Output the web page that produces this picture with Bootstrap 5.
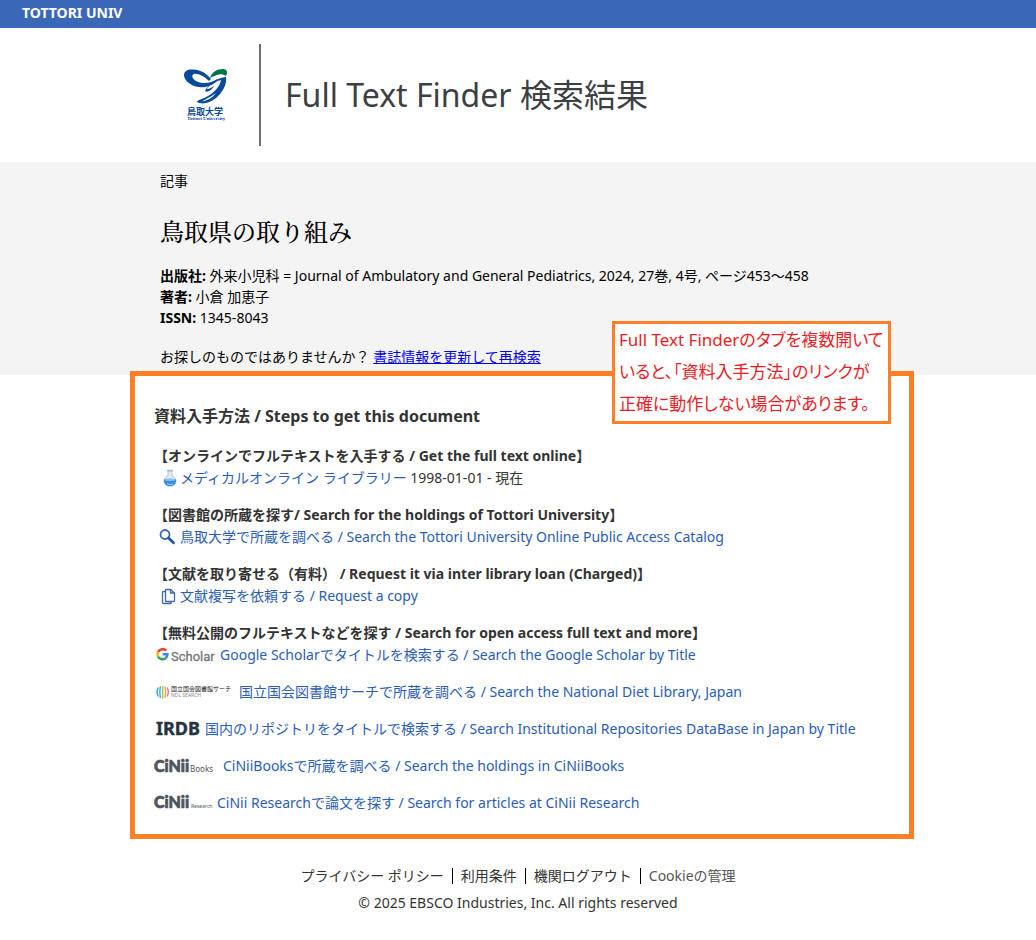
<!DOCTYPE html>
<html lang="ja">
<head>
<meta charset="utf-8">
<meta name="viewport" content="width=device-width, initial-scale=1">
<title>Full Text Finder 検索結果</title>
<link href="https://cdn.jsdelivr.net/npm/bootstrap@5.3.0/dist/css/bootstrap.min.css" rel="stylesheet">
<style>
  body { font-family: "Noto Sans", "Noto Sans CJK JP", sans-serif; font-size: 14px; line-height: 21px; color: #000; background: #fff; }
  a { text-decoration: none; color: #2a5db8; }
  .topbar { background: #3b67b8; line-height: 26px; padding: 0 22px 2px; }
  .topbar a { color: #fff; }
  .column { max-width: 784px; margin: 0 auto; }
  .shell { padding-left: 8px; }
  .inset { padding-left: 30px; }
  .site-logo { width: 99px; }
  .brand-row { height: 102px; }
  .rule { width: 2px; background: #6c7076; }
  .brand-row h1 { font-size: 32px; line-height: 48px; color: #3c4043; padding-left: 24px; }
  .record { background: #f4f4f4; padding-top: 8px; padding-bottom: 8px; }
  .record h2 { font-family: "Noto Serif CJK JP", "Noto Serif JP", "Liberation Serif", "Noto Sans CJK JP", serif; font-size: 24px; line-height: 36px; font-weight: 500; margin: 22px 0 16px; }
  .record .again { margin-top: 18px; }
  .record a { color: #00e; text-decoration: underline; }
  .steps { border: 5px solid #ff7f27; background: #fff; margin-top: -4px; padding: 28px 19px 20px; color: #333; }
  .steps h2 { font-size: 16px; line-height: 24px; margin-bottom: 17px; }
  .steps h3 { font-size: 14px; line-height: 22px; margin: 0; }
  .steps li { line-height: 22px; margin-bottom: 15px; }
  .steps ul:last-child li:last-child { margin-bottom: 0; }
  .steps svg { flex: none; overflow: visible; }
  .notice { top: -55px; right: 18px; width: 279px; border: 3px solid #ff7f27; background: #fff; color: #ed1c24; font-size: 17px; line-height: 32px; padding: 0 4px 1px; white-space: nowrap; font-feature-settings: "palt"; }
  footer { color: #333; padding-top: 26px; padding-bottom: 22px; }
  footer a { color: #333; }
  footer li + li { border-left: 1px solid #000; padding-left: 8px; margin-left: 8px; }
  footer ul { line-height: 16px; margin: 3px 0 5px; }
  footer .cookie { color: #555; }
  footer p { line-height: 28px; }
</style>
</head>
<body>
<nav class="topbar fw-bold"><a href="#">TOTTORI UNIV</a></nav>

<header class="shell py-3">
  <div class="column inset d-flex brand-row">
    <a class="site-logo d-flex align-items-center" href="#" aria-label="鳥取大学">
      <svg width="92" height="102" viewBox="0 0 92 102">
        <path d="M24 31C24 27 28 25 33 25.500C42 26 47 30 51 35L49 37C44 32 38 29 34 30C30 31 33 38 42 39C48 39.500 53 38 57 35L56 38C51 42 45 44 39 43C30 42 24 36 24 31Z" fill="#07499b"/>
        <path d="M45 47C49 39 57 34 66 33C67 40 63 48 56 54C50 59 42 61 37 58C37 56 43 55 48 52C55 48 60 42 61 36C54 38 48 42 47 45C50 45 52 43 54 42C52 46 47 49 45 47Z" fill="#07499b"/>
        <path d="M42 57.500C48 56.500 53 53 56 49C52 52 47 54.500 42 57.500Z" fill="#fff"/>
        <path d="M50 34C52 28 57 25 63 25C67 25 68 28 66 32C63 30 60 30 57 31C54 32 52 33 50 34Z" fill="#007447"/>
        <text x="27" y="71" font-size="9" font-weight="700" fill="#07499b">鳥取大学</text>
        <text x="27" y="76" font-size="5" font-weight="700" font-family="Liberation Serif" fill="#07499b">Tottori University</text>
      </svg>
    </a>
    <div class="rule"></div>
    <h1 class="fw-normal align-self-center mb-0">Full Text Finder 検索結果</h1>
  </div>
</header>

<main>
  <section class="record shell">
    <div class="column inset">
      <div>記事</div>
      <h2>鳥取県の取り組み</h2>
      <div><b>出版社:</b> 外来小児科 = Journal of Ambulatory and General Pediatrics, 2024, 27巻, 4号, ページ453～458</div>
      <div><b>著者:</b> 小倉 加恵子</div>
      <div><b>ISSN:</b> 1345-8043</div>
      <div class="again">お探しのものではありませんか？ <a href="#">書誌情報を更新して再検索</a></div>
    </div>
  </section>

  <div class="shell">
    <section class="steps column position-relative">
      <div class="notice position-absolute">Full Text Finderのタブを複数開いて<br>いると、「資料入手方法」のリンクが<br>正確に動作しない場合があります。</div>
      <h2 class="fw-bold">資料入手方法 / Steps to get this document</h2>

      <h3 class="fw-bold">【オンラインでフルテキストを入手する / Get the full text online】</h3>
      <ul class="list-unstyled mb-0">
        <li class="d-flex align-items-center">
          <svg width="26" height="20" viewBox="0 0 26 20">
            <path d="M14 3V8C11 9 10 11 10 13C10 16 12 18 16 18S22 16 22 13C22 11 21 9 18 8V3Z" fill="#e4edf4" stroke="#a9b6c1" stroke-width=".8"/>
            <path d="M10 11.500Q16 10 22 11.500C22.500 16 19 18.300 16 18.300S9.500 16 10 11.500Z" fill="#358ee0"/>
            <ellipse cx="16" cy="11.800" rx="5" ry="1.300" fill="#83c2ef"/>
            <path d="M13 15.500Q16 17.500 19 16" fill="none" stroke="#8bd2fa"/>
            <path d="M13 2.500H19" stroke="#adb8c2" stroke-width="1.500"/>
          </svg>
          <span><a href="#">メディカルオンライン ライブラリー</a> 1998-01-01 - 現在</span>
        </li>
      </ul>

      <h3 class="fw-bold">【図書館の所蔵を探す/ Search for the holdings of Tottori University】</h3>
      <ul class="list-unstyled mb-0">
        <li class="d-flex align-items-center">
          <svg width="26" height="20" viewBox="0 0 26 20">
            <circle cx="11" cy="7.500" r="4.500" fill="#fff" stroke="#3767b4" stroke-width="1.800"/>
            <path d="M14.500 11L19.500 15.800" stroke="#2455a8" stroke-width="2.800" stroke-linecap="round"/>
          </svg>
          <a href="#">鳥取大学で所蔵を調べる / Search the Tottori University Online Public Access Catalog</a>
        </li>
      </ul>

      <h3 class="fw-bold">【文献を取り寄せる（有料） / Request it via inter library loan (Charged)】</h3>
      <ul class="list-unstyled mb-0">
        <li class="d-flex align-items-center">
          <svg width="26" height="20" viewBox="0 0 26 20" fill="#fff" stroke="#4068b0" stroke-width="1.300" stroke-linejoin="round">
            <path d="M9.500 5.500H13L17 9V17.500H9.500Q8.500 17.500 8.500 16.500V6.500Q8.500 5.500 9.500 5.500Z"/>
            <path d="M12 3.500H16.500L20.500 7V14.500Q20.500 15.500 19.500 15.500H12Q11.500 15.500 11.500 15V4Q11.500 3.500 12 3.500Z"/>
            <path d="M16.500 3.500V7H20.500" fill="none"/>
          </svg>
          <a href="#">文献複写を依頼する / Request a copy</a>
        </li>
      </ul>

      <h3 class="fw-bold">【無料公開のフルテキストなどを探す / Search for open access full text and more】</h3>
      <ul class="list-unstyled mb-0">
        <li class="d-flex align-items-center">
          <svg width="66" height="20" viewBox="0 0 66 20" fill="none" stroke-width="2.600">
            <path d="M12.200 5.600A5.200 5.200 0 0 0 3.900 7" stroke="#ea4335"/>
            <path d="M3.900 7A5.200 5.200 0 0 0 3.900 11.500" stroke="#fbbc05"/>
            <path d="M3.900 11.500A5.200 5.200 0 0 0 11.600 13.200" stroke="#34a853"/>
            <path d="M11.600 13.200A5.200 5.200 0 0 0 13.400 9.300H8.600" stroke="#4285f4"/>
            <text x="17" y="16" font-size="13" font-family="Roboto" fill="#777" stroke="#777" stroke-width=".3">Scholar</text>
          </svg>
          <a href="#">Google Scholarでタイトルを検索する / Search the Google Scholar by Title</a>
        </li>
        <li class="d-flex align-items-center">
          <svg width="85" height="20" viewBox="0 0 85 20" fill="none" stroke-width="1.400" stroke-linecap="round">
            <path d="M4 6Q2 10 4 14" stroke="#2ba9e0"/>
            <path d="M6.300 5Q5.300 10 6.300 15.500" stroke="#45a9c7"/>
            <path d="M8.700 4.500V16" stroke="#a1c94c"/>
            <path d="M11.100 5Q12.100 10 11.100 15.500" stroke="#f0a73b"/>
            <path d="M13.400 6Q15.400 10 13.400 14" stroke="#ed749b"/>
            <text x="17" y="9" font-size="6" fill="#222">国立国会図書館サーチ</text>
            <text x="17" y="15" font-size="5" fill="#888">NDL SEARCH</text>
          </svg>
          <a href="#">国立国会図書館サーチで所蔵を調べる / Search the National Diet Library, Japan</a>
        </li>
        <li class="d-flex align-items-center">
          <svg width="51" height="22" viewBox="0 0 51 22">
            <text x="2" y="17" font-size="18" font-weight="700" font-family="Noto Sans" fill="#26333f" stroke="#26333f" stroke-width=".4">IRDB</text>
          </svg>
          <a href="#">国内のリポジトリをタイトルで検索する / Search Institutional Repositories DataBase in Japan by Title</a>
        </li>
        <li class="d-flex align-items-center">
          <svg width="69" height="20" viewBox="0 0 69 20" fill="#4d545b">
            <text x="0" y="16" font-size="16" font-weight="900" font-family="Lato" stroke="#4d545b" stroke-width=".7">CiNii</text>
            <text x="36" y="16" font-size="8">Books</text>
          </svg>
          <a href="#">CiNiiBooksで所蔵を調べる / Search the holdings in CiNiiBooks</a>
        </li>
        <li class="d-flex align-items-center">
          <svg width="63" height="20" viewBox="0 0 63 20" fill="#4d545b">
            <text x="0" y="15" font-size="16" font-weight="900" font-family="Lato" stroke="#4d545b" stroke-width=".7">CiNii</text>
            <text x="37" y="15" font-size="5">Research</text>
          </svg>
          <a href="#">CiNii Researchで論文を探す / Search for articles at CiNii Research</a>
        </li>
      </ul>
    </section>
  </div>
</main>

<footer class="text-center">
  <ul class="list-unstyled d-flex flex-wrap justify-content-center">
    <li><a href="#">プライバシー ポリシー</a></li>
    <li><a href="#">利用条件</a></li>
    <li><a href="#">機関ログアウト</a></li>
    <li><a class="cookie" href="#">Cookieの管理</a></li>
  </ul>
  <p class="mb-0">© 2025 EBSCO Industries, Inc. All rights reserved</p>
</footer>
<script src="https://cdn.jsdelivr.net/npm/bootstrap@5.3.0/dist/js/bootstrap.bundle.min.js"></script>
</body>
</html>
